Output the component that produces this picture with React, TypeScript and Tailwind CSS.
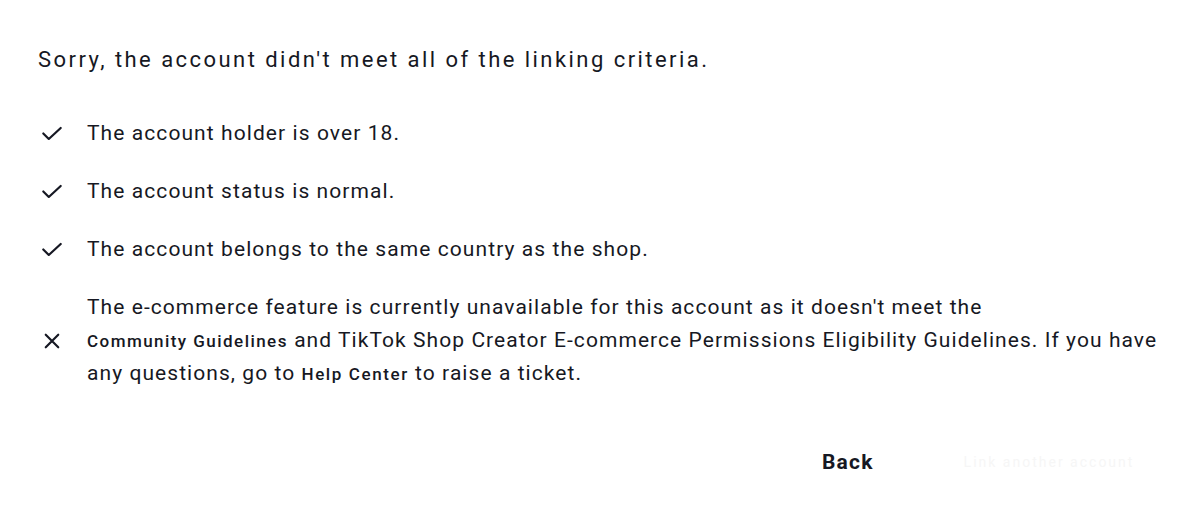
import React from "react";

const Check = () => (
  <svg width="22" height="22" viewBox="0 0 24 24" fill="none" stroke="#161823" strokeWidth="2.4" strokeLinecap="round" strokeLinejoin="round">
    <path d="M2.5 12.5l6 6L21.5 6.5" />
  </svg>
);

const Cross = () => (
  <svg width="20" height="20" viewBox="0 0 24 24" fill="none" stroke="#161823" strokeWidth="2.6" strokeLinecap="round">
    <path d="M4.5 4.5l15 15M19.5 4.5l-15 15" />
  </svg>
);

export default function App() {
  const items = [
    "The account holder is over 18.",
    "The account status is normal.",
    "The account belongs to the same country as the shop.",
  ];
  return (
    <div
      className="w-[1204px] h-[514px] bg-white text-[#161823] pl-[38px] pt-[44px]"
      style={{ fontFamily: "Roboto, 'Noto Sans', sans-serif" }}
    >
      <h1 className="text-[22px] leading-[32px] font-normal tracking-[2.45px]">
        Sorry, the account didn't meet all of the linking criteria.
      </h1>
      <ul className="mt-[41px] flex flex-col gap-[26px]">
        {items.map((t) => (
          <li key={t} className="flex items-center text-[21px] leading-[32px] tracking-[1.08px]">
            <span className="w-[28px] flex justify-center">
              <Check />
            </span>
            <span className="ml-[21px]">{t}</span>
          </li>
        ))}
        <li className="flex items-center text-[21px] leading-[32.5px] tracking-[1.06px]">
          <span className="w-[28px] flex justify-center">
            <Cross />
          </span>
          <span className="ml-[21px] w-[1085px]">
            The e-commerce feature is currently unavailable for this account as it doesn't meet the{" "}
            <span className="text-[17px] font-medium tracking-[1.45px] whitespace-nowrap">Community Guidelines</span> and TikTok Shop
            Creator E-commerce Permissions Eligibility Guidelines. If you have any questions, go to{" "}
            <span className="text-[17px] font-medium tracking-[1.6px] whitespace-nowrap">Help Center</span> to raise a ticket.
          </span>
        </li>
      </ul>
      <div className="mt-[55px] flex items-center">
        <button className="ml-[768px] text-[21px] font-bold leading-[32px] tracking-[1.2px] px-[16px]">Back</button>
        <button className="ml-[74px] text-[14px] leading-[32px] tracking-[2px] text-[#f6f6f6]">
          Link another account
        </button>
      </div>
    </div>
  );
}
